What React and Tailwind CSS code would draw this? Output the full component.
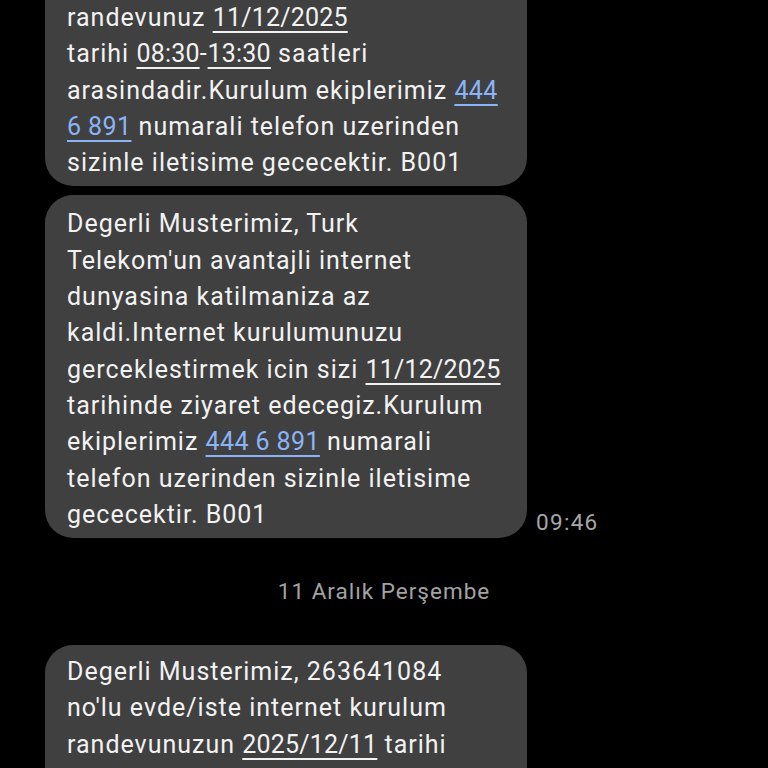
import React from 'react';

const U = ({ children }) => (
  <span className="tracking-[0.2px] underline decoration-[1.5px] underline-offset-[5px]">{children}</span>
);

const L = ({ children }) => (
  <span className="tracking-[0.4px] text-[#8ab4f8] underline decoration-[1.5px] underline-offset-[5px]">{children}</span>
);

const Bubble = ({ lines, className = '' }) => (
  <div className={`w-[482px] rounded-[28px] bg-[#404040] pl-[22px] ${className}`}>
    {lines.map((line, i) => (
      <div key={i} className="whitespace-nowrap leading-[36.3px]">
        {line}
      </div>
    ))}
  </div>
);

const App = () => {
  const first = [
    <>randevunuz <U>11/12/2025</U></>,
    <>tarihi <U>08:30</U>-<U>13:30</U> saatleri</>,
    <>arasindadir.Kurulum ekiplerimiz <L>444</L></>,
    <><L>6 891</L> numarali telefon uzerinden</>,
    <>sizinle iletisime gececektir. B001</>,
  ];

  const second = [
    <>Degerli Musterimiz, Turk</>,
    <>Telekom'un avantajli internet</>,
    <>dunyasina katilmaniza az</>,
    <>kaldi.Internet kurulumunuzu</>,
    <>gerceklestirmek icin sizi <U>11/12/2025</U></>,
    <>tarihinde ziyaret edecegiz.Kurulum</>,
    <>ekiplerimiz <L>444 6 891</L> numarali</>,
    <>telefon uzerinden sizinle iletisime</>,
    <>gececektir. B001</>,
  ];

  const third = [
    <>Degerli Musterimiz, 263641084</>,
    <>no'lu evde/iste internet kurulum</>,
    <>randevunuzun <U>2025/12/11</U> tarihi</>,
  ];

  return (
    <div className="h-screen w-full overflow-hidden bg-black font-['Roboto',sans-serif] text-[25px] tracking-[1px] text-[#f2f2f2]">
      <div className="pl-[45px]">
        {/* earlier message, scrolled off the top */}
        <Bubble lines={first} className="-mt-[60px] pt-[60px] pb-[5px]" />

        <div className="mt-[9px] flex items-end">
          <Bubble lines={second} className="pt-[11px] pb-[5px]" />
          <span className="ml-[9px] mb-[3px] text-[22.5px] leading-[26px] tracking-[1.3px] text-[#a6a6a6]">09:46</span>
        </div>
      </div>

      <div className="mt-[38px] text-center text-[22.5px] leading-[30px] text-[#a3a3a3]">
        11 Aralık Perşembe
      </div>

      <div className="mt-[39px] pl-[45px]">
        <Bubble lines={third} className="pt-[9px] pb-[60px]" />
      </div>
    </div>
  );
};

export default App;
